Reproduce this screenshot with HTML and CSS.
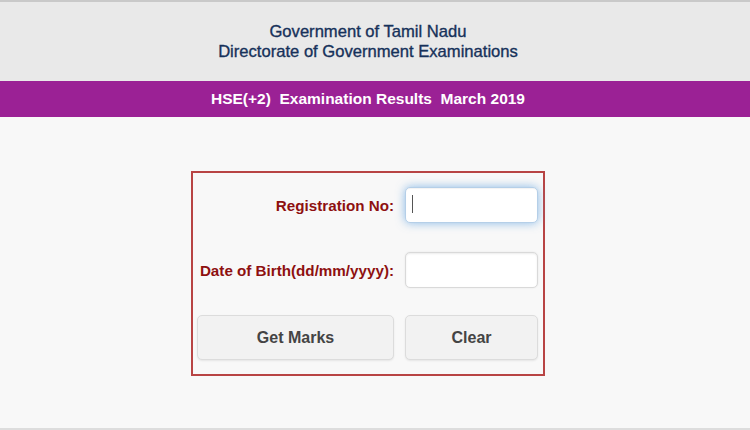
FILE: index.html
```html
<!DOCTYPE html>
<html lang="en">
<head>
    <meta charset="UTF-8">
    <meta name="viewport" content="width=device-width, initial-scale=1.0">
    <title>HSE(+2) Examination Results March 2019</title>
    <link rel="stylesheet" href="styles.css">
</head>
<body>

<div class="page">
    <div class="header">
        <div>Government of Tamil Nadu</div>
        <div>Directorate of Government Examinations</div>
    </div>
    <div class="title-bar">HSE(+2)&nbsp; Examination Results&nbsp; March 2019</div>

    <div class="content">
        <form class="result-form" onsubmit="return false;">
            <label class="field-label" for="regno">Registration No:</label>
            <span class="input-wrap caret">
                <input type="text" id="regno" class="field-input focused">
            </span>

            <label class="field-label" for="dob">Date of Birth(dd/mm/yyyy):</label>
            <span class="input-wrap">
                <input type="text" id="dob" class="field-input">
            </span>

            <button type="submit" class="btn">Get Marks</button>
            <button type="reset" class="btn">Clear</button>
        </form>
    </div>
</div>

</body>
</html>
```

FILE: styles.css
```css
body {
    margin: 0;
    background: #f8f8f8;
    font-family: "Liberation Sans", Arial, sans-serif;
}

.page {
    height: 430px;
    box-sizing: border-box;
    border-top: 2px solid #c9c9c9;
    border-bottom: 2px solid #dddddd;
}

.header {
    background: #e9e9e9;
    color: #16315a;
    font-size: 16.6px;
    line-height: 20px;
    text-align: center;
    padding: 20px 14px 19px 0;
    -webkit-text-stroke: 0.35px #16315a;
}

.title-bar {
    background: #9b2195;
    color: #fff;
    font-size: 15.5px;
    font-weight: bold;
    line-height: 36px;
    text-align: center;
    padding-right: 14px;
}

.content {
    padding: 54px 14px 0 0;
}

.result-form {
    width: 341px;
    margin: 0 auto;
    padding: 14px 5px 14px 4px;
    border: 2px solid #b84444;
    display: grid;
    grid-template-columns: 197px 133px;
    column-gap: 11px;
    row-gap: 29px;
    align-items: center;
}

.field-label {
    text-align: right;
    color: #8e1010;
    font-size: 15.2px;
    font-weight: bold;
}

.input-wrap {
    position: relative;
    display: block;
}

.field-input {
    display: block;
    width: 100%;
    height: 36px;
    box-sizing: border-box;
    border: 1px solid #d9d9d9;
    border-radius: 5px;
    background: #fff;
    box-shadow: inset 0 1px 2px rgba(0,0,0,0.08), 0 0 2px rgba(0,0,0,0.08);
    outline: none;
}

.field-input.focused {
    border-color: #b5cfe8;
    box-shadow: inset 0 1px 1px rgba(0,0,0,0.05), 0 0 10px rgba(102,165,225,0.75);
}

.caret::after {
    content: "";
    position: absolute;
    left: 7px;
    top: 8px;
    width: 1px;
    height: 18px;
    background: #555;
}

.btn {
    height: 45px;
    margin-top: -2px;
    border: 1px solid #dcdcdc;
    border-radius: 5px;
    background: #f2f2f2;
    box-shadow: 0 1px 2px rgba(0,0,0,0.08);
    color: #444;
    font-family: "Liberation Sans", Arial, sans-serif;
    font-size: 16px;
    font-weight: bold;
    cursor: pointer;
}
```
